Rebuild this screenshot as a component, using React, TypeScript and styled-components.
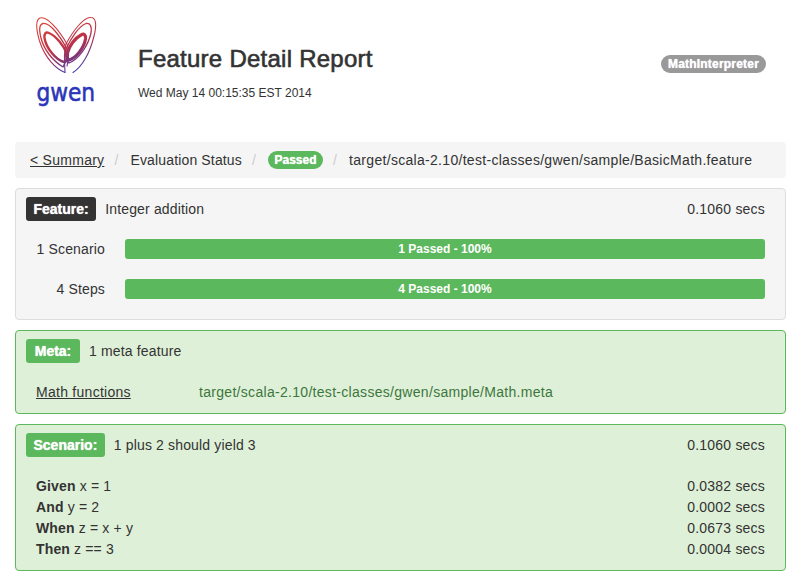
import React from 'react';
import styled, { createGlobalStyle } from 'styled-components';

const GlobalStyle = createGlobalStyle`
  html, body {
    margin: 0;
    padding: 0;
    background: #fff;
  }
  body {
    font-family: "Liberation Sans", Arial, sans-serif;
    font-size: 14px;
    line-height: 20px;
    letter-spacing: 0.15px;
    color: #333;
  }
`;

const steps = [
  { keyword: 'Given', text: 'x = 1', time: '0.0382 secs' },
  { keyword: 'And', text: 'y = 2', time: '0.0002 secs' },
  { keyword: 'When', text: 'z = x + y', time: '0.0673 secs' },
  { keyword: 'Then', text: 'z == 3', time: '0.0004 secs' },
];

const GwenLogo: React.FC = () => (
  <LogoWrap>
    <svg width="70" height="66" viewBox="31 12 70 66" fill="none">
      <defs>
        <linearGradient id="wing" gradientUnits="userSpaceOnUse" x1="48" y1="20" x2="72" y2="74">
          <stop offset="0" stopColor="#dc4238" />
          <stop offset="0.55" stopColor="#b8324a" />
          <stop offset="1" stopColor="#3a38b0" />
        </linearGradient>
      </defs>
      <g stroke="url(#wing)" strokeLinecap="round">
        <path strokeWidth="1.1" d="M65 72.5C56 69 45 58 39.500 41C36 29 35.500 20 40 18C47 15.500 59 30 67 44C69 50 69 58 67 66" />
        <path strokeWidth="1.1" d="M73 72.5C82 67 90 53 94 36C97 25 96 17.500 91 17.500C84 16.500 73 31 66 44C64 50 64 58 65 72" />
        <path strokeWidth="1.3" d="M63 67C53 61 44 50 41 38C39 30 39 24.500 43 23.500C50 22.500 60 36 67 49C68 54 66 62 63 67" />
        <path strokeWidth="1.3" d="M69 63C79 59 88 46 91 33C92 26 90 22.500 86 23.500C79 26 71 38 66 49C65 54 66 60 69 63" />
        <path strokeWidth="2.4" d="M64 62C56 60 46 48 44.500 38C44 33 46 31.500 49 33C56 36 64 46 66.500 53C68 58 67 62 64 62Z" />
        <path strokeWidth="3.2" d="M69 60C76 58 84 48 85.500 39C86 35 84 33 81 35C75 38 69 46 67.500 53C66.500 57 67 60 69 60Z" />
      </g>
    </svg>
    <LogoText>gwen</LogoText>
  </LogoWrap>
);

const App: React.FC = () => (
  <Page>
    <GlobalStyle />
    <Header>
      <GwenLogo />
      <TitleBlock>
        <Title>Feature Detail Report</Title>
        <Timestamp>Wed May 14 00:15:35 EST 2014</Timestamp>
      </TitleBlock>
      <InterpreterBadge>MathInterpreter</InterpreterBadge>
    </Header>

    <Breadcrumb>
      <Crumb><PlainLink href="#">&lt; Summary</PlainLink></Crumb>
      <Crumb>Evaluation Status</Crumb>
      <Crumb><StatusBadge>Passed</StatusBadge></Crumb>
      <Crumb><FilePath>target/scala-2.10/test-classes/gwen/sample/BasicMath.feature</FilePath></Crumb>
    </Breadcrumb>

    <Panel>
      <PanelHead>
        <Label>Feature:</Label>
        <HeadText>Integer addition</HeadText>
        <Duration>0.1060 secs</Duration>
      </PanelHead>
      <Summary>
        <SummaryRow>
          <SummaryName>1 Scenario</SummaryName>
          <Bar>1 Passed - 100%</Bar>
        </SummaryRow>
        <SummaryRow>
          <SummaryName>4 Steps</SummaryName>
          <Bar>4 Passed - 100%</Bar>
        </SummaryRow>
      </Summary>
    </Panel>

    <Panel $success>
      <PanelHead>
        <Label $success>Meta:</Label>
        <HeadText>1 meta feature</HeadText>
      </PanelHead>
      <MetaRow>
        <MetaName><PlainLink href="#">Math functions</PlainLink></MetaName>
        <MetaPath>target/scala-2.10/test-classes/gwen/sample/Math.meta</MetaPath>
      </MetaRow>
    </Panel>

    <Panel $success>
      <PanelHead>
        <Label $success>Scenario:</Label>
        <HeadText>1 plus 2 should yield 3</HeadText>
        <Duration>0.1060 secs</Duration>
      </PanelHead>
      <StepList>
        {steps.map((step) => (
          <StepRow key={step.keyword}>
            <span><strong>{step.keyword}</strong> {step.text}</span>
            <Duration>{step.time}</Duration>
          </StepRow>
        ))}
      </StepList>
    </Panel>
  </Page>
);

const Page = styled.div`
  padding: 0 15px;
  width: 771px;
`;

const Header = styled.header`
  display: flex;
  align-items: flex-start;
  height: 142px;
`;

const LogoWrap = styled.div`
  display: flex;
  flex-direction: column;
  align-items: center;
  width: 70px;
  margin: 12px 0 0 16px;
`;

const LogoText = styled.div`
  margin-top: 0;
  font-family: "DejaVu Sans", sans-serif;
  font-size: 25px;
  line-height: 30px;
  letter-spacing: 0;
  color: #2b35b8;
  -webkit-text-stroke: 0.6px #2b35b8;
  transform: scaleX(0.87);
`;

const TitleBlock = styled.div`
  margin: 43px 0 0 37px;
  flex: 1;
`;

const Title = styled.h1`
  margin: 0;
  font-size: 24px;
  font-weight: 400;
  line-height: 32px;
  color: #333;
  -webkit-text-stroke: 0.6px #333;
  letter-spacing: 0.25px;
`;

const Timestamp = styled.div`
  margin-top: 10px;
  font-size: 12px;
  line-height: 17px;
  letter-spacing: 0;
  color: #333;
`;

const InterpreterBadge = styled.span`
  margin: 55px 20px 0 0;
  padding: 0 7px;
  height: 18px;
  line-height: 18px;
  border-radius: 9px;
  background: #999;
  color: #fff;
  font-size: 12px;
  font-weight: 700;
  letter-spacing: 0.2px;
  text-shadow: 0 0 1px #fff;
`;

const Breadcrumb = styled.ol`
  display: flex;
  align-items: center;
  height: 36px;
  margin: 0 0 10px;
  padding: 0 15px;
  list-style: none;
  background: #f5f5f5;
  border-radius: 4px;
`;

const Crumb = styled.li`
  display: flex;
  align-items: center;

  & + &::before {
    content: '/';
    padding: 0 12px 0 10px;
    color: #ccc;
  }
`;

const PlainLink = styled.a`
  color: #333;
  text-decoration: underline;
  letter-spacing: 0.27px;
`;

const FilePath = styled.span`
  letter-spacing: 0.3px;
`;

const StatusBadge = styled.span`
  height: 18px;
  padding: 0 6.5px;
  line-height: 18px;
  border-radius: 9px;
  background: #5cb85c;
  color: #fff;
  font-size: 12px;
  font-weight: 700;
  letter-spacing: 0;
  text-shadow: 0 0 1px #fff;
`;

const Panel = styled.section<{ $success?: boolean }>`
  margin-bottom: 10px;
  padding: 8px 20px 0 10px;
  border: 1px solid ${(p) => (p.$success ? '#5cb85c' : '#ddd')};
  border-radius: 4px;
  background: ${(p) => (p.$success ? '#dff0d8' : '#f5f5f5')};
`;

const PanelHead = styled.div`
  display: flex;
  align-items: center;
  height: 24px;
`;

const Label = styled.span<{ $success?: boolean }>`
  height: 24px;
  min-width: 54px;
  box-sizing: border-box;
  padding: 0 7.5px;
  margin-right: 9px;
  line-height: 24px;
  border-radius: 3px;
  background: ${(p) => (p.$success ? '#5cb85c' : '#333')};
  color: #fff;
  font-size: 14px;
  font-weight: 700;
  letter-spacing: 0;
  text-align: center;
  text-shadow: 0 0 1px #fff;
`;

const HeadText = styled.span`
  flex: 1;
`;

const Duration = styled.span`
  white-space: nowrap;
  letter-spacing: 0.2px;
`;

const Summary = styled.div`
  display: flex;
  flex-direction: column;
  gap: 20px;
  padding: 18px 0 20px;
`;

const SummaryRow = styled.div`
  display: flex;
  align-items: center;
`;

const SummaryName = styled.span`
  width: 79px;
  margin-right: 20px;
  text-align: right;
`;

const Bar = styled.div`
  flex: 1;
  height: 20px;
  line-height: 20px;
  border-radius: 3px;
  background: #5cb85c;
  color: #fff;
  font-size: 12px;
  font-weight: 700;
  letter-spacing: 0;
  text-align: center;
`;

const MetaRow = styled.div`
  display: flex;
  padding: 19px 0 11px 10px;
`;

const MetaName = styled.span`
  width: 163px;
`;

const MetaPath = styled.span`
  color: #3c763d;
  letter-spacing: 0.3px;
`;

const StepList = styled.div`
  padding: 19px 0 10px 10px;
`;

const StepRow = styled.div`
  display: flex;
  justify-content: space-between;
  height: 21px;
  line-height: 21px;

  strong {
    font-weight: 700;
  }
`;

export default App;
